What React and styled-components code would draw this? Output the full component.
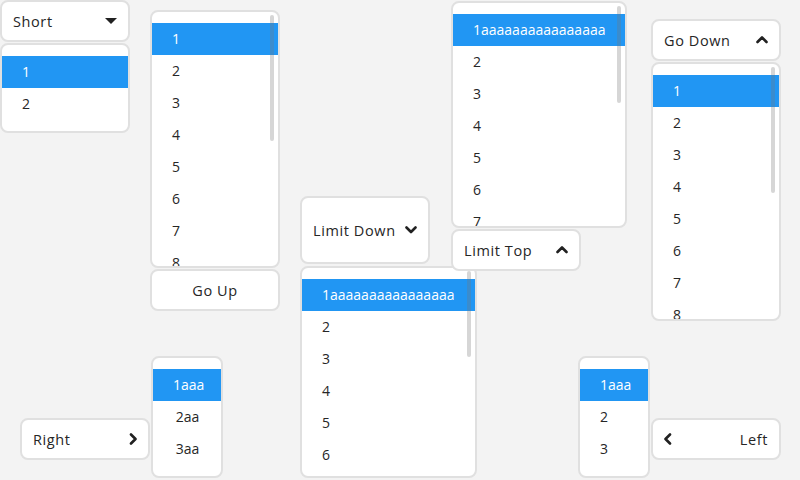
import React from "react";
import styled, { createGlobalStyle } from "styled-components";

const Global = createGlobalStyle`
  html, body { margin: 0; padding: 0; background: #f3f3f3; }
  body { font-family: "Open Sans", "Liberation Sans", sans-serif; }
`;

const Canvas = styled.div`
  position: relative;
  width: 800px;
  height: 480px;
  overflow: hidden;
  background: #f3f3f3;
  font-size: 14px;
  color: #262626;
`;

const Widget = styled.div`
  position: absolute;
  left: ${(p) => p.$x}px;
  top: ${(p) => p.$y}px;
  width: ${(p) => p.$w}px;
  height: ${(p) => p.$h}px;
`;

const DropButton = styled.div`
  box-sizing: border-box;
  width: 100%;
  height: 100%;
  display: flex;
  align-items: center;
  justify-content: ${(p) => (p.$center ? "center" : "space-between")};
  padding: 0 11px;
  background: #fff;
  border: 2px solid #e0e0e0;
  border-radius: 8px;
  font-size: 14.5px;
  letter-spacing: 0.6px;
  white-space: nowrap;
`;

const Icon = styled.svg`
  display: block;
  flex: none;
`;

const List = styled.div`
  position: absolute;
  box-sizing: border-box;
  left: ${(p) => p.$left}px;
  top: ${(p) => p.$top}px;
  width: ${(p) => p.$w}px;
  height: ${(p) => p.$h}px;
  padding: 11px 0;
  background: #fff;
  border: 2px solid #e0e0e0;
  border-radius: 8px;
  overflow: hidden;
`;

const Row = styled.div`
  height: 32px;
  line-height: 32px;
  padding: 0 19px 0 20px;
  white-space: nowrap;
  letter-spacing: 0;
  text-align: ${(p) => p.$align || "left"};
  background: ${(p) => (p.$sel ? "#2196f3" : "transparent")};
  color: ${(p) => (p.$sel ? "#ffffff" : "#262626")};
`;

const Scrollbar = styled.div`
  position: absolute;
  right: 4px;
  top: 3px;
  width: 4px;
  height: ${(p) => p.$h}px;
  border-radius: 2px;
  background: rgba(120, 120, 120, 0.3);
`;

const Caret = () => (
  <Icon width="12" height="6" viewBox="0 0 12 6">
    <polygon points="0,0 12,0 6,6" fill="#212121" />
  </Icon>
);

const Chevron = ({ dir }) => {
  if (dir === "left" || dir === "right") {
    return (
      <Icon width="8" height="12" viewBox="0 0 8 12">
        <polyline
          points={dir === "right" ? "2,1.5 6.5,6 2,10.5" : "6,1.5 1.5,6 6,10.5"}
          fill="none"
          stroke="#212121"
          strokeWidth="2.6"
          strokeLinecap="round"
          strokeLinejoin="round"
        />
      </Icon>
    );
  }
  return (
    <Icon width="12" height="8" viewBox="0 0 12 8">
      <polyline
        points={dir === "down" ? "1.5,1.5 6,6 10.5,1.5" : "1.5,6 6,1.5 10.5,6"}
        fill="none"
        stroke="#212121"
        strokeWidth="2.6"
        strokeLinecap="round"
        strokeLinejoin="round"
      />
    </Icon>
  );
};

const nums = (n, first) =>
  Array.from({ length: n }, (_, i) => (i === 0 && first ? first : String(i + 1)));

const Options = ({ items, align }) =>
  items.map((t, i) => (
    <Row key={i} $sel={i === 0} $align={align}>
      {t}
    </Row>
  ));

const LONG = "1aaaaaaaaaaaaaaaa";

export default function App() {
  return (
    <>
      <Global />
      <Canvas>
        {/* Short */}
        <Widget $x={0} $y={0} $w={130} $h={42}>
          <DropButton>
            <span>Short</span>
            <Caret />
          </DropButton>
          <List $left={0} $top={43} $w={130} $h={90}>
            <Options items={["1", "2"]} />
          </List>
        </Widget>

        {/* Go Up */}
        <Widget $x={150} $y={269} $w={130} $h={42}>
          <DropButton $center>
            <span>Go Up</span>
          </DropButton>
          <List $left={0} $top={-259} $w={130} $h={258}>
            <Options items={nums(8)} />
            <Scrollbar $h={126} />
          </List>
        </Widget>

        {/* Limit Down */}
        <Widget $x={300} $y={196} $w={130} $h={68}>
          <DropButton>
            <span>Limit Down</span>
            <Chevron dir="down" />
          </DropButton>
          <List $left={0} $top={70} $w={177} $h={212}>
            <Options items={nums(6, LONG)} />
            <Scrollbar $h={86} />
          </List>
        </Widget>

        {/* Limit Top */}
        <Widget $x={451} $y={229} $w={130} $h={42}>
          <DropButton>
            <span>Limit Top</span>
            <Chevron dir="up" />
          </DropButton>
          <List $left={0} $top={-228} $w={176} $h={227}>
            <Options items={nums(7, LONG)} />
            <Scrollbar $h={97} />
          </List>
        </Widget>

        {/* Go Down */}
        <Widget $x={651} $y={19} $w={130} $h={42}>
          <DropButton>
            <span>Go Down</span>
            <Chevron dir="up" />
          </DropButton>
          <List $left={0} $top={43} $w={130} $h={259}>
            <Options items={nums(8)} />
            <Scrollbar $h={126} />
          </List>
        </Widget>

        {/* Right */}
        <Widget $x={20} $y={418} $w={130} $h={42}>
          <DropButton>
            <span>Right</span>
            <Chevron dir="right" />
          </DropButton>
          <List $left={131} $top={-62} $w={72} $h={122}>
            <Options items={["1aaa", "2aa", "3aa"]} align="center" />
          </List>
        </Widget>

        {/* Left */}
        <Widget $x={651} $y={418} $w={130} $h={42}>
          <DropButton>
            <Chevron dir="left" />
            <span>Left</span>
          </DropButton>
          <List $left={-73} $top={-62} $w={72} $h={122}>
            <Options items={["1aaa", "2", "3"]} />
          </List>
        </Widget>
      </Canvas>
    </>
  );
}
